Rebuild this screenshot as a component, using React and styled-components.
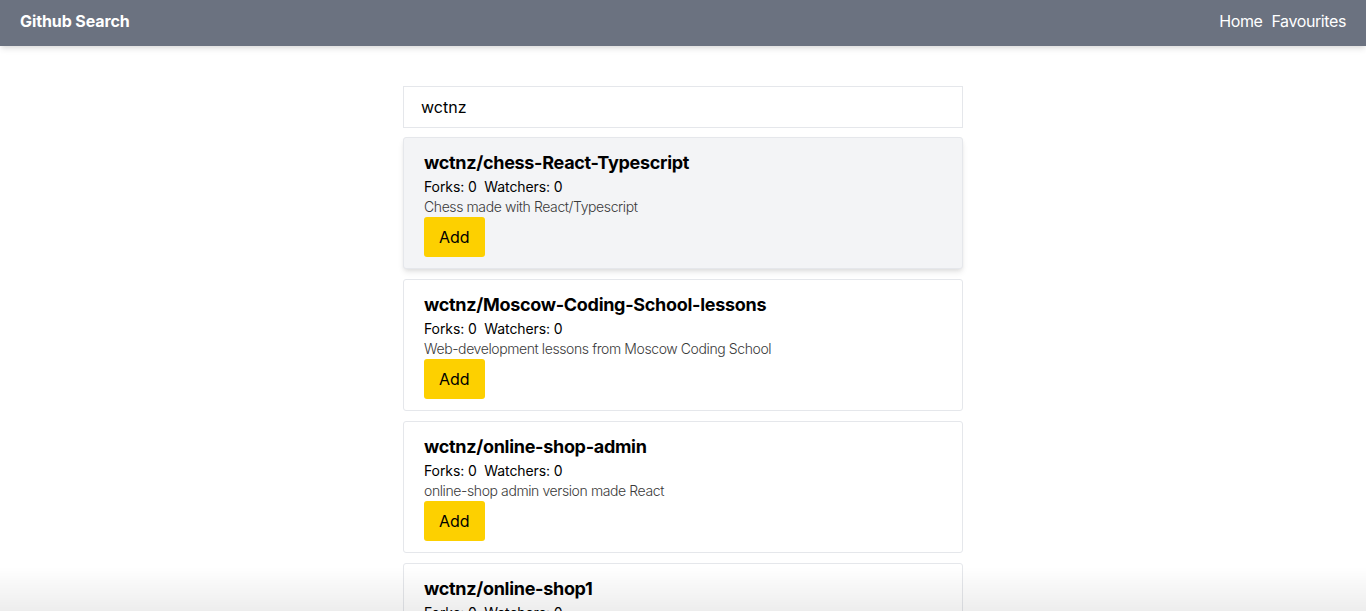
import styled, { createGlobalStyle } from 'styled-components';

const GlobalStyle = createGlobalStyle`
  * { box-sizing: border-box; }
  body {
    margin: 0;
    font-family: Inter, "Noto Sans", sans-serif;
    color: #000;
    background: #fff;
  }
`;

const Nav = styled.nav`
  display: flex;
  justify-content: space-between;
  align-items: center;
  height: 46px;
  padding: 0 20px 4px;
  background: #6b7280;
  color: #fff;
  box-shadow: 0 4px 6px -1px rgba(0,0,0,0.1), 0 2px 4px -1px rgba(0,0,0,0.06);
`;

const Brand = styled.h3`
  margin: 0;
  font-size: 16px;
  font-weight: 700;
  letter-spacing: -0.1px;
`;

const Links = styled.div`
  display: flex;
  gap: 9px;
  font-size: 16px;
  letter-spacing: -0.4px;
`;

const Page = styled.main`
  display: flex;
  justify-content: center;
  padding-top: 40px;
  &::after {
    content: "";
    position: fixed;
    left: 0;
    right: 0;
    bottom: 0;
    height: 44px;
    pointer-events: none;
    background: linear-gradient(rgba(0,0,0,0), rgba(0,0,0,0.07));
  }
`;

const Column = styled.div`
  width: 560px;
  display: flex;
  flex-direction: column;
  gap: 10px;
`;

const Search = styled.input`
  height: 42px;
  width: 100%;
  margin-bottom: -1px;
  padding: 0 17px;
  border: 1px solid #e5e7eb;
  font: inherit;
  font-size: 16px;
  color: #000;
  outline: none;
`;

const Card = styled.div`
  border: 1px solid #e5e7eb;
  border-radius: 3px;
  padding: 11px 20px 11px;
  background: ${p => (p.$hover ? '#f3f4f6' : '#fff')};
  box-shadow: ${p => (p.$hover ? '0 4px 6px -1px rgba(0,0,0,0.1), 0 2px 4px -1px rgba(0,0,0,0.06)' : 'none')};
  cursor: pointer;
`;

const Title = styled.h2`
  margin: 0;
  font-size: 18px;
  line-height: 28px;
  font-weight: 700;
  letter-spacing: -0.3px;
`;

const Stats = styled.p`
  margin: 0;
  font-size: 14px;
  line-height: 20px;
  letter-spacing: -0.1px;
`;

const Desc = styled.p`
  margin: 0;
  font-size: 14px;
  line-height: 20px;
  font-weight: 300;
  letter-spacing: -0.4px;
  color: #3a3a3a;
`;

const AddButton = styled.button`
  display: block;
  height: 40px;
  padding: 0 15px;
  border: none;
  border-radius: 3px;
  background: #fdd000;
  font: inherit;
  font-size: 16px;
  color: #000;
  cursor: pointer;
`;

const repos = [
  { name: 'wctnz/chess-React-Typescript', desc: 'Chess made with React/Typescript' },
  { name: 'wctnz/Moscow-Coding-School-lessons', desc: 'Web-development lessons from Moscow Coding School' },
  { name: 'wctnz/online-shop-admin', desc: 'online-shop admin version made React' },
  { name: 'wctnz/online-shop1', desc: 'Online shop' },
];

export default function App() {
  return (
    <>
      <GlobalStyle />
      <Nav>
        <Brand>Github Search</Brand>
        <Links>
          <span>Home</span>
          <span>Favourites</span>
        </Links>
      </Nav>
      <Page>
        <Column>
          <Search defaultValue="wctnz" placeholder="Search for Github username..." />
          {repos.map((r, i) => (
            <Card key={r.name} $hover={i === 0}>
              <Title>{r.name}</Title>
              <Stats>Forks: <span>0</span>&nbsp; Watchers: <span>0</span></Stats>
              <Desc>{r.desc}</Desc>
              <AddButton>Add</AddButton>
            </Card>
          ))}
        </Column>
      </Page>
    </>
  );
}
